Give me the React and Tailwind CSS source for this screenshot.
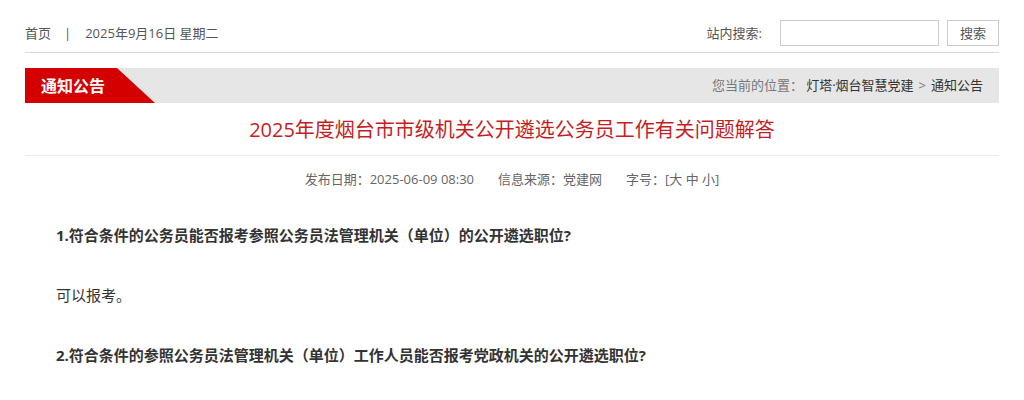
const font = { fontFamily: '"Open Sans", "Noto Sans CJK SC", sans-serif' };

const questions = [
  { text: '1.符合条件的公务员能否报考参照公务员法管理机关（单位）的公开遴选职位?', bold: true },
  { text: '可以报考。', bold: false },
  { text: '2.符合条件的参照公务员法管理机关（单位）工作人员能否报考党政机关的公开遴选职位?', bold: true },
];

export default function App() {
  return (
    <div className="bg-white min-h-[400px]" style={font}>
      <div className="mx-auto w-[974px]">
        {/* top bar */}
        <div className="flex items-start justify-between pt-[20px] h-[53px] border-b border-[#d9d9d9] text-[13px] text-[#555]">
          <div className="flex leading-[26px]">
            <span>首页</span>
            <span className="ml-[13px] mr-[14px]">|</span>
            <span>2025年9月16日 星期二</span>
          </div>
          <div className="flex items-start">
            <span className="leading-[26px] mr-[18px]">站内搜索:</span>
            <input className="w-[159px] h-[26px] border border-[#ccc] outline-none" />
            <button className="ml-[8px] w-[52px] h-[26px] border border-[#ccc] bg-white text-[#555] text-[13px] leading-[24px]">
              搜索
            </button>
          </div>
        </div>

        {/* header bar */}
        <div className="mt-[15px] h-[35px] bg-[#e6e6e6] flex items-center justify-between">
          <div className="h-full w-[130px] bg-[#d40000] [clip-path:polygon(0_0,92px_0,130px_100%,0_100%)] flex items-center pl-[16px] text-white font-bold text-[16px]">
            通知公告
          </div>
          <div className="pr-[16px] text-[13px] text-[#333] flex">
            <span className="text-[#777] mr-[3px]">您当前的位置：</span>
            <span>灯塔·烟台智慧党建</span>
            <span className="text-[#777] mx-[5px]">&gt;</span>
            <span>通知公告</span>
          </div>
        </div>

        {/* title */}
        <h1 className="h-[53px] leading-[53px] text-center text-[20px] text-[#c41e24] border-b border-[#ececec]">
          2025年度烟台市市级机关公开遴选公务员工作有关问题解答
        </h1>

        {/* meta */}
        <div className="pt-[11px] flex justify-center gap-[24px] text-[13px] leading-[24px] text-[#666]">
          <span>发布日期：2025-06-09 08:30</span>
          <span>信息来源：党建网</span>
          <span>字号：[大 中 小]</span>
        </div>

        {/* content */}
        <div className="mt-[29px] pl-[31px] text-[15px] text-[#333]">
          {questions.map((q, i) => (
            <p key={i} className={`leading-[30px] mb-[30px] ${q.bold ? 'font-bold' : ''}`}>
              {q.text}
            </p>
          ))}
        </div>
      </div>
    </div>
  );
}
